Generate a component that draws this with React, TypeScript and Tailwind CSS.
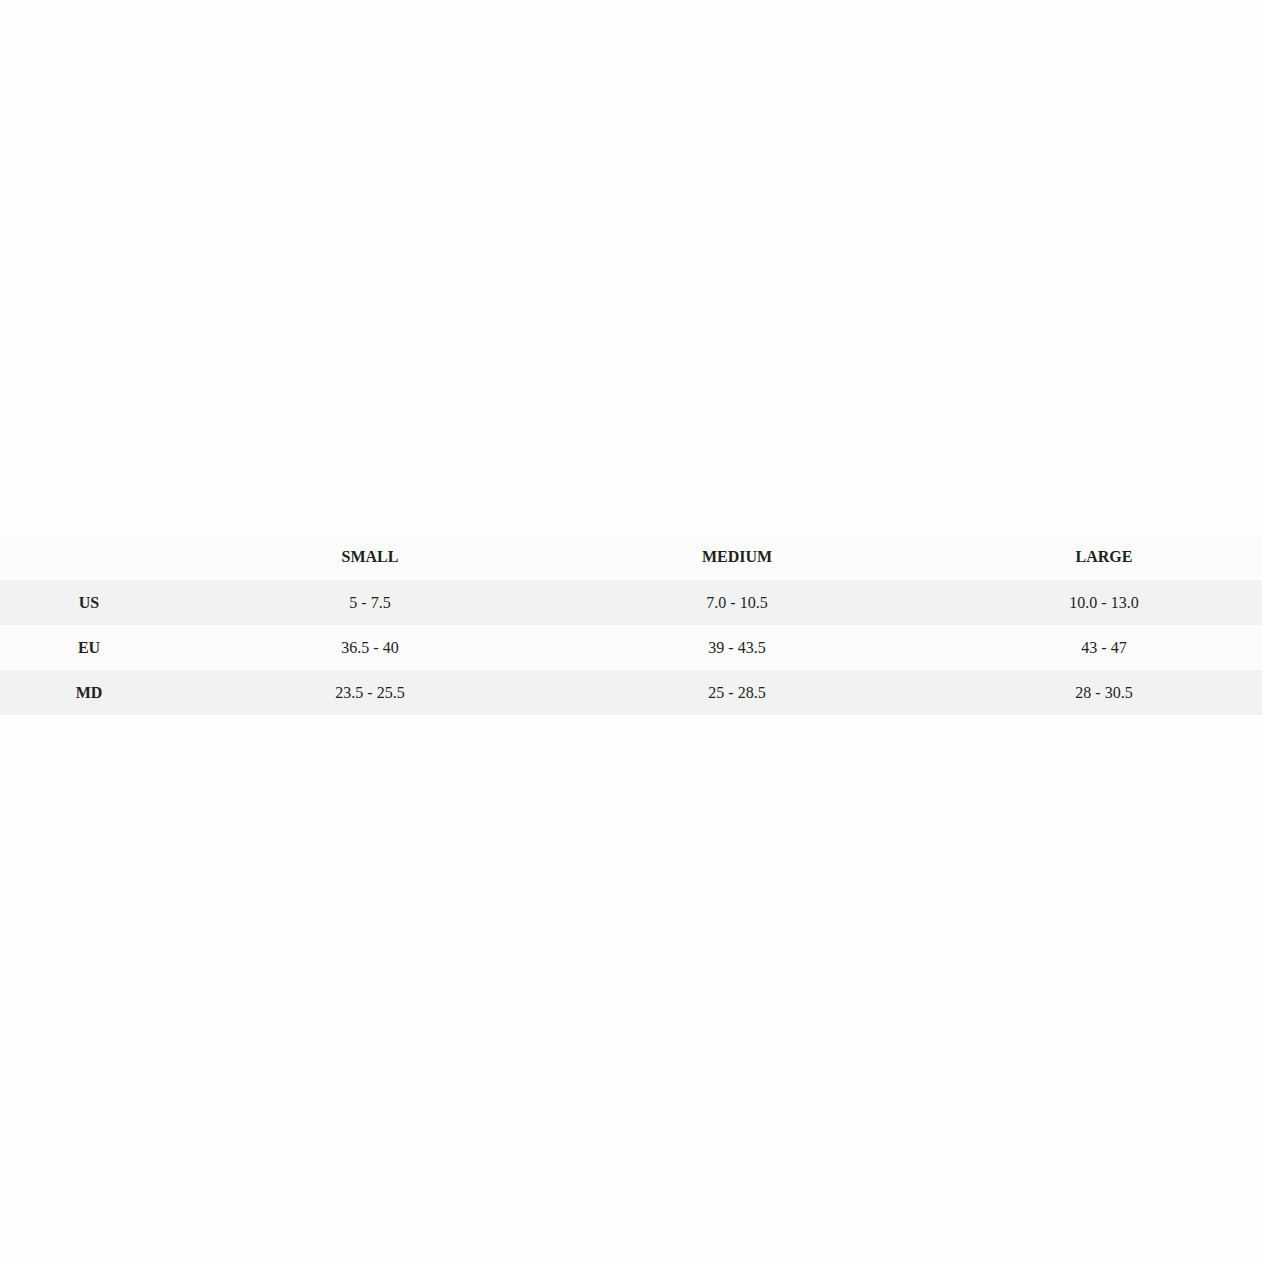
const rows = [
  { label: "US", small: "5 - 7.5", medium: "7.0 - 10.5", large: "10.0 - 13.0" },
  { label: "EU", small: "36.5 - 40", medium: "39 - 43.5", large: "43 - 47" },
  { label: "MD", small: "23.5 - 25.5", medium: "25 - 28.5", large: "28 - 30.5" },
];

const cols = "grid grid-cols-[178px_384px_350px_384px] w-[1296px]";

export default function App() {
  return (
    <div className="w-[1262px] h-[1262px] bg-[#fefefe] overflow-hidden flex flex-col pt-[534px] font-['Liberation_Serif',serif] text-[16px] text-[#1c2421]">
      <div className={`${cols} h-[46px] pb-[1px] items-center bg-[#fcfcfc] font-bold text-center`}>
        <div />
        <div>SMALL</div>
        <div>MEDIUM</div>
        <div>LARGE</div>
      </div>
      {rows.map((r, i) => (
        <div
          key={r.label}
          className={`${cols} h-[45px] items-center text-center ${i % 2 === 0 ? "bg-[#f2f2f2]" : "bg-[#fcfcfc]"}`}
        >
          <div className="font-bold">{r.label}</div>
          <div>{r.small}</div>
          <div>{r.medium}</div>
          <div>{r.large}</div>
        </div>
      ))}
    </div>
  );
}
